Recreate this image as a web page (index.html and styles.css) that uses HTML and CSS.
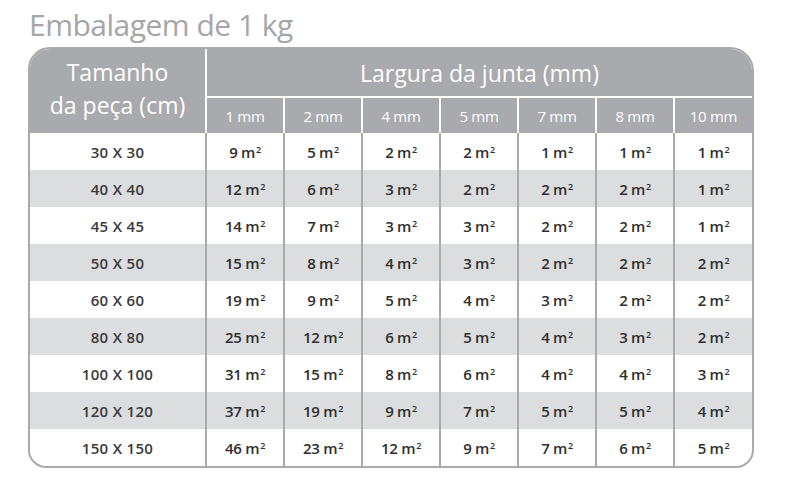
FILE: index.html
```html
<!DOCTYPE html>
<html lang="pt">
<head>
<meta charset="utf-8">
<title>Embalagem de 1 kg</title>
<link rel="stylesheet" href="styles.css">
</head>
<body>
<div class="page">
  <h1 class="title">Embalagem de 1 kg</h1>
  <div class="card">
    <table class="grid">
      <colgroup>
        <col class="c-size">
        <col class="c-val"><col class="c-val"><col class="c-val"><col class="c-val"><col class="c-val"><col class="c-val"><col class="c-val">
      </colgroup>
      <thead>
        <tr class="h1">
          <th rowspan="2" class="size-head">Tamanho<br>da peça (cm)</th>
          <th colspan="7" class="group-head">Largura da junta (mm)</th>
        </tr>
        <tr class="h2">
          <th>1 mm</th><th>2 mm</th><th>4 mm</th><th>5 mm</th><th>7 mm</th><th>8 mm</th><th>10 mm</th>
        </tr>
      </thead>
      <tbody>
        <tr><td>30 X 30</td><td>9 m<sup>2</sup></td><td>5 m<sup>2</sup></td><td>2 m<sup>2</sup></td><td>2 m<sup>2</sup></td><td>1 m<sup>2</sup></td><td>1 m<sup>2</sup></td><td>1 m<sup>2</sup></td></tr>
        <tr class="alt"><td>40 X 40</td><td>12 m<sup>2</sup></td><td>6 m<sup>2</sup></td><td>3 m<sup>2</sup></td><td>2 m<sup>2</sup></td><td>2 m<sup>2</sup></td><td>2 m<sup>2</sup></td><td>1 m<sup>2</sup></td></tr>
        <tr><td>45 X 45</td><td>14 m<sup>2</sup></td><td>7 m<sup>2</sup></td><td>3 m<sup>2</sup></td><td>3 m<sup>2</sup></td><td>2 m<sup>2</sup></td><td>2 m<sup>2</sup></td><td>1 m<sup>2</sup></td></tr>
        <tr class="alt"><td>50 X 50</td><td>15 m<sup>2</sup></td><td>8 m<sup>2</sup></td><td>4 m<sup>2</sup></td><td>3 m<sup>2</sup></td><td>2 m<sup>2</sup></td><td>2 m<sup>2</sup></td><td>2 m<sup>2</sup></td></tr>
        <tr><td>60 X 60</td><td>19 m<sup>2</sup></td><td>9 m<sup>2</sup></td><td>5 m<sup>2</sup></td><td>4 m<sup>2</sup></td><td>3 m<sup>2</sup></td><td>2 m<sup>2</sup></td><td>2 m<sup>2</sup></td></tr>
        <tr class="alt"><td>80 X 80</td><td>25 m<sup>2</sup></td><td>12 m<sup>2</sup></td><td>6 m<sup>2</sup></td><td>5 m<sup>2</sup></td><td>4 m<sup>2</sup></td><td>3 m<sup>2</sup></td><td>2 m<sup>2</sup></td></tr>
        <tr><td>100 X 100</td><td>31 m<sup>2</sup></td><td>15 m<sup>2</sup></td><td>8 m<sup>2</sup></td><td>6 m<sup>2</sup></td><td>4 m<sup>2</sup></td><td>4 m<sup>2</sup></td><td>3 m<sup>2</sup></td></tr>
        <tr class="alt"><td>120 X 120</td><td>37 m<sup>2</sup></td><td>19 m<sup>2</sup></td><td>9 m<sup>2</sup></td><td>7 m<sup>2</sup></td><td>5 m<sup>2</sup></td><td>5 m<sup>2</sup></td><td>4 m<sup>2</sup></td></tr>
        <tr><td>150 X 150</td><td>46 m<sup>2</sup></td><td>23 m<sup>2</sup></td><td>12 m<sup>2</sup></td><td>9 m<sup>2</sup></td><td>7 m<sup>2</sup></td><td>6 m<sup>2</sup></td><td>5 m<sup>2</sup></td></tr>
      </tbody>
    </table>
  </div>
</div>
</body>
</html>
```

FILE: styles.css
```css
html, body {
  margin: 0;
  padding: 0;
  background: #ffffff;
}

.page {
  width: 795px;
  height: 500px;
  padding: 7px 0 0 28px;
  box-sizing: border-box;
  font-family: "Open Sans", Lato, sans-serif;
}

.title {
  margin: 0 0 5px 1px;
  height: 35px;
  line-height: 35px;
  font-size: 30px;
  font-weight: 400;
  color: #a5a6a8;
  letter-spacing: -0.5px;
}

.card {
  width: 726px;
  border: 2px solid #a9aaad;
  border-radius: 22px 24px 18px 18px;
  overflow: hidden;
  box-sizing: border-box;
}

.grid {
  width: 722px;
  border-collapse: collapse;
  table-layout: fixed;
}

.c-size { width: 176px; }
.c-val { width: 78px; }

.grid th {
  background: #a9aaad;
  color: #ffffff;
  font-weight: 400;
  padding: 0;
  text-align: center;
  vertical-align: middle;
}

.h1 th { height: 47px; }
.h2 th {
  height: 35px;
  font-size: 15px;
  line-height: 20px;
  letter-spacing: -0.3px;
}

.size-head {
  font-size: 23px;
  line-height: 33px;
  padding-bottom: 4px !important;
  border-right: 2px solid #ffffff;
}

.group-head {
  font-size: 23px;
  line-height: 28px;
  border-bottom: 2px solid #ffffff;
}

.h2 th + th { border-left: 2px solid #ffffff; }

.grid td {
  height: 37px;
  padding: 0;
  text-align: center;
  font-size: 15px;
  line-height: 20px;
  font-weight: 600;
  color: #2e2e30;
  border-left: 2px solid #a9aaad;
  letter-spacing: -0.3px;
}

.grid td:first-child {
  border-left: none;
  font-weight: 600;
  font-size: 15px;
  letter-spacing: 0.3px;
  color: #3a3a3c;
}

.grid tr.alt td { background: #dcdddf; }

.grid sup {
  font-size: 9px;
  line-height: 0;
  vertical-align: 5px;
  margin-left: 1px;
}
```
